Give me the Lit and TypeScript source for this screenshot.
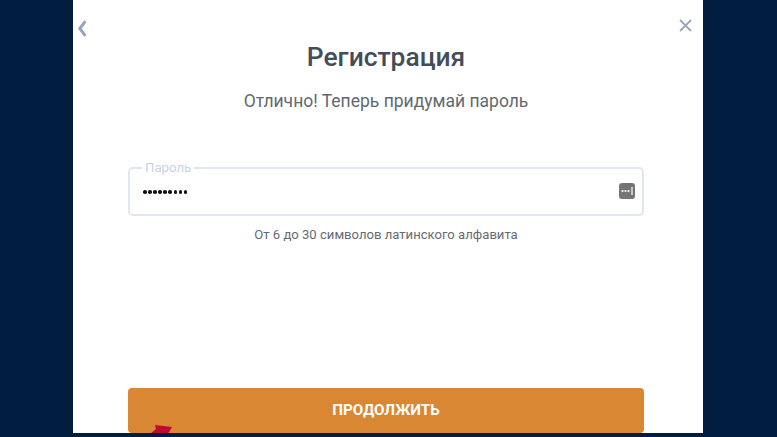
import { LitElement, html, css } from 'lit';
import { customElement } from 'lit/decorators.js';

@customElement('app-root')
export class AppRoot extends LitElement {
  static styles = css`
    :host {
      display: block;
      width: 777px;
      height: 437px;
      background: #001d3f;
      overflow: hidden;
      font-family: Roboto, 'Liberation Sans', sans-serif;
    }

    .modal {
      position: relative;
      box-sizing: border-box;
      width: 630px;
      height: 433px;
      margin-left: 73px;
      padding: 41px 59px 0 55px;
      background: #fff;
      display: flex;
      flex-direction: column;
      overflow: hidden;
    }

    .back {
      position: absolute;
      left: 4px;
      top: 20px;
      width: 10px;
      height: 17px;
    }

    .close {
      position: absolute;
      left: 606px;
      top: 19px;
      width: 13px;
      height: 13px;
    }

    h1 {
      margin: 0;
      font-size: 26.4px;
      line-height: 32px;
      font-weight: 500;
      color: #434d58;
      text-align: center;
    }

    .subtitle {
      margin: 18px 0 0;
      font-size: 17.5px;
      line-height: 20px;
      color: #62696f;
      text-align: center;
    }

    fieldset {
      box-sizing: border-box;
      margin: 49px 0 0;
      padding: 0 7px 0 13px;
      border: 2px solid #dfe8f2;
      border-radius: 5px;
    }

    legend {
      margin-left: -1px;
      padding: 0 3px;
      font-size: 13.2px;
      line-height: 16px;
      color: #c5d4e6;
    }

    .row {
      height: 32px;
      padding-bottom: 6px;
      display: flex;
      align-items: center;
      justify-content: space-between;
    }

    .dots {
      display: flex;
      gap: 1.6px;
    }

    .dot {
      width: 3.5px;
      height: 3.5px;
      border-radius: 50%;
      background: #111;
    }

    .key {
      display: block;
      width: 16px;
      height: 16px;
      margin-top: -2px;
    }

    .hint {
      margin: 10px 0 0;
      font-size: 13.1px;
      line-height: 18px;
      color: #666b70;
      text-align: center;
    }

    button {
      display: block;
      width: 100%;
      height: 45px;
      margin-top: auto;
      padding: 0 0 2px;
      border: none;
      border-radius: 4px;
      background: #da8733;
      color: #fff;
      font-family: inherit;
      font-size: 15.2px;
      font-weight: 700;
    }

    .pointer {
      position: absolute;
      left: 77px;
      top: 424px;
      width: 22px;
      height: 10px;
    }
  `;

  render() {
    const dots = Array.from({ length: 9 });

    return html`
      <div class="modal">
        <svg class="back" viewBox="0 0 10 17">
          <path d="M8.4 1.2 L2.8 8.5 L8.4 15.8" fill="none" stroke="#98a5bd" stroke-width="3" />
        </svg>
        <svg class="close" viewBox="0 0 13 13">
          <path d="M1 1 L12 12 M12 1 L1 12" fill="none" stroke="#9aa6bc" stroke-width="1.8" />
        </svg>

        <h1>Регистрация</h1>
        <p class="subtitle">Отлично! Теперь придумай пароль</p>

        <fieldset>
          <legend>Пароль</legend>
          <div class="row">
            <div class="dots">${dots.map(() => html`<span class="dot"></span>`)}</div>
            <svg class="key" viewBox="0 0 16 16">
              <rect width="16" height="16" rx="3" fill="#757575" />
              <circle cx="3.5" cy="8" r="1.1" fill="#fff" />
              <circle cx="6.5" cy="8" r="1.1" fill="#fff" />
              <circle cx="9.5" cy="8" r="1.1" fill="#fff" />
              <path d="M13 4 V12" stroke="#fff" stroke-width="1.2" />
            </svg>
          </div>
        </fieldset>

        <p class="hint">От 6 до 30 символов латинского алфавита</p>

        <button>ПРОДОЛЖИТЬ</button>

        <svg class="pointer" viewBox="0 0 22 10">
          <path d="M5 1 L22 3 L18 10 L0 10 L6 5 Z" fill="#bd0a35" />
        </svg>
      </div>
    `;
  }
}
